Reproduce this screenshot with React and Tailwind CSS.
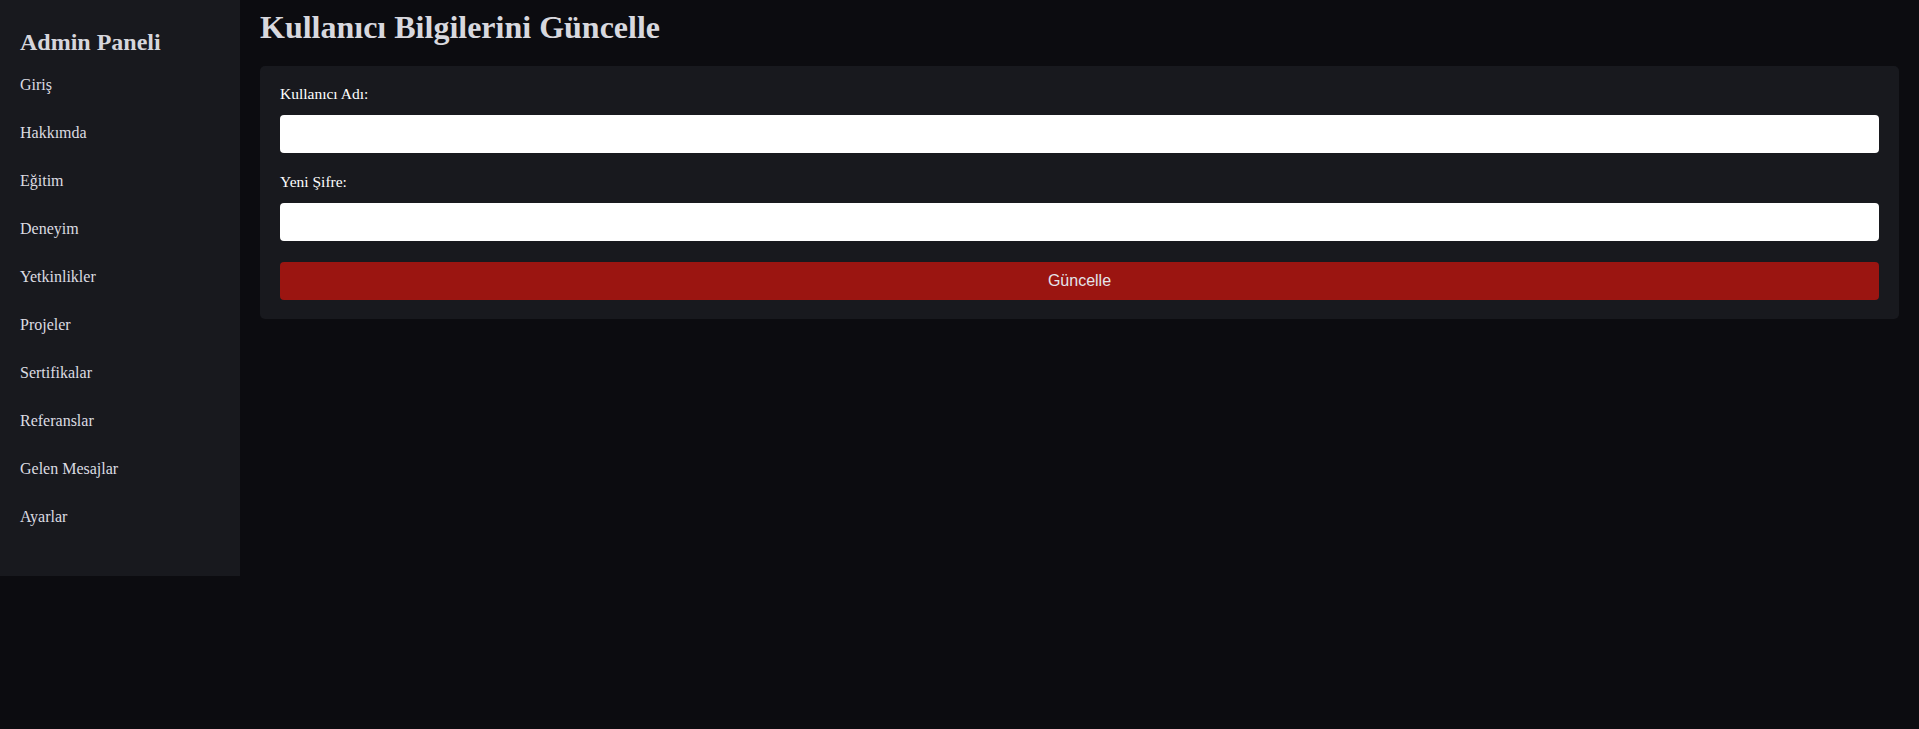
import { useState } from "react";

const menu = [
  "Giriş",
  "Hakkımda",
  "Eğitim",
  "Deneyim",
  "Yetkinlikler",
  "Projeler",
  "Sertifikalar",
  "Referanslar",
  "Gelen Mesajlar",
  "Ayarlar",
];

const Sidebar = () => {
  return (
    <aside className="w-[240px] shrink-0 self-start bg-[#18191e] px-5 pt-[28px] pb-[35px]">
      <h2 className="text-[24px] leading-[28px] font-bold text-[#d6d6dc] mb-[5px]">
        Admin Paneli
      </h2>
      <ul>
        {menu.map((item) => (
          <li
            key={item}
            className="h-[48px] text-[16px] leading-[48px] text-[#dcdce2] cursor-pointer"
          >
            {item}
          </li>
        ))}
      </ul>
    </aside>
  );
};

const App = () => {
  const [username, setUsername] = useState("");
  const [password, setPassword] = useState("");

  return (
    <div
      className="min-h-screen w-full flex bg-[#0c0c10]"
      style={{ fontFamily: '"Liberation Serif", "Times New Roman", serif' }}
    >
      <Sidebar />
      <main className="flex-1 px-5 pt-[7px]">
        <h1 className="text-[32px] leading-[40px] font-bold text-[#d8d8de] mb-[19px]">
          Kullanıcı Bilgilerini Güncelle
        </h1>
        <form
          className="bg-[#18191e] rounded-[5px] p-5 pb-[19px]"
          onSubmit={(e) => e.preventDefault()}
        >
          <label className="block text-[15.5px] leading-[16px] text-white mb-[13px]">
            Kullanıcı Adı:
          </label>
          <input
            type="text"
            value={username}
            onChange={(e) => setUsername(e.target.value)}
            className="block w-full h-[38px] bg-white rounded-[4px] px-3 mb-[21px] outline-none text-black"
          />
          <label className="block text-[15.5px] leading-[16px] text-white mb-[13px]">
            Yeni Şifre:
          </label>
          <input
            type="password"
            value={password}
            onChange={(e) => setPassword(e.target.value)}
            className="block w-full h-[38px] bg-white rounded-[4px] px-3 mb-[21px] outline-none text-black"
          />
          <button
            type="submit"
            className="block w-full h-[38px] bg-[#9b1511] rounded-[4px] text-[16px] text-[#e4e4ea] cursor-pointer"
            style={{ fontFamily: '"Liberation Sans", Arial, sans-serif' }}
          >
            Güncelle
          </button>
        </form>
      </main>
    </div>
  );
};

export default App;
